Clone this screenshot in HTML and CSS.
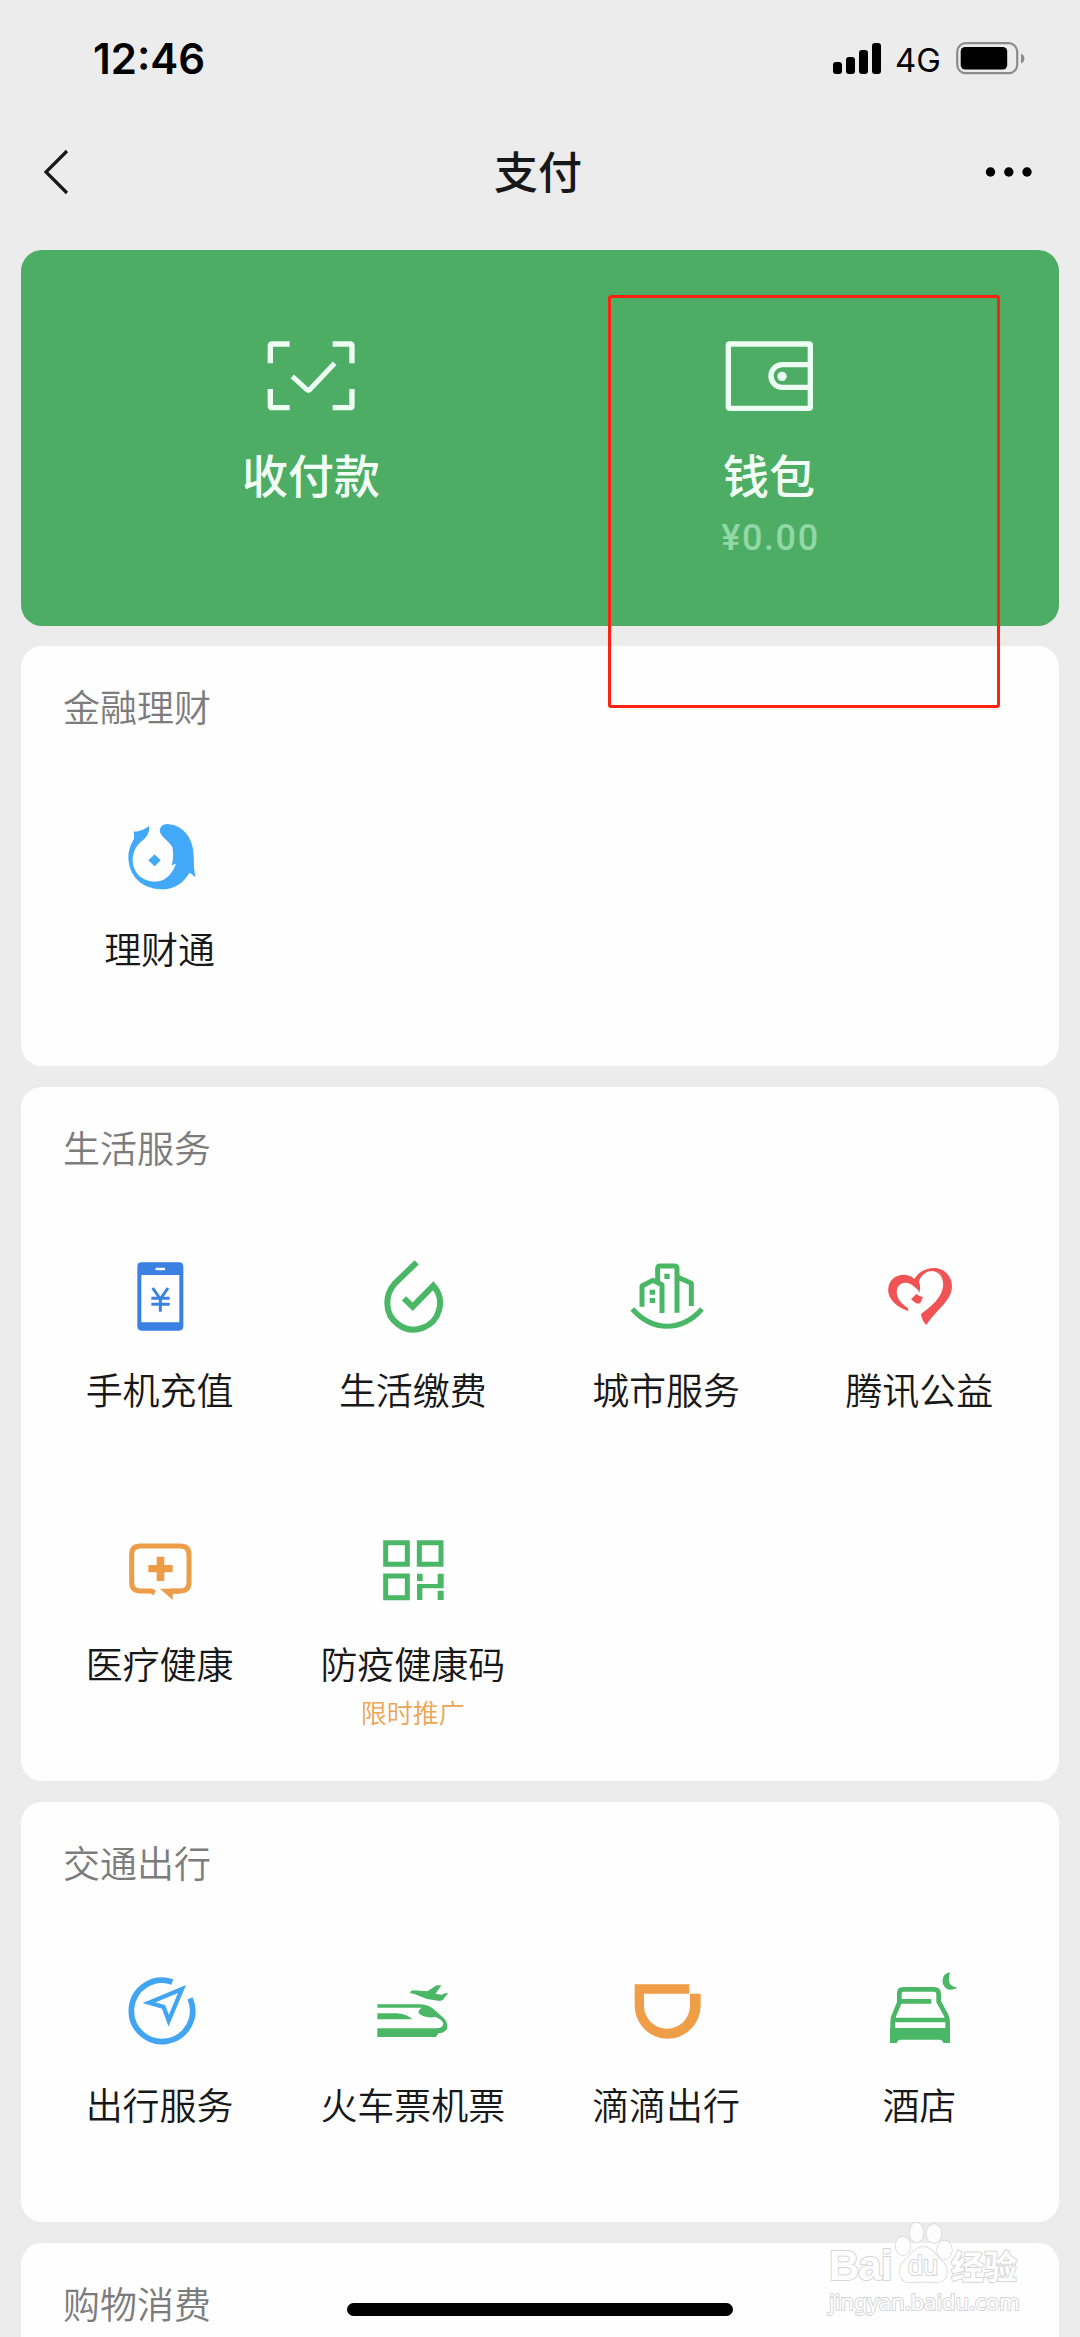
FILE: index.html
```html
<!DOCTYPE html>
<html lang="zh-CN">
<head>
<meta charset="utf-8">
<title>支付</title>
<link rel="stylesheet" href="styles.css">
</head>
<body>
<div class="screen">
  <div class="status">
    <span class="time">12:46</span>
    <div class="status-right">
      <svg class="signal" viewBox="0 0 48 32" width="48" height="32"><rect x="0" y="19" width="9" height="12" rx="3"/><rect x="13" y="14" width="9" height="17" rx="3"/><rect x="26" y="7" width="9" height="24" rx="3"/><rect x="39" y="0" width="9" height="31" rx="3"/></svg>
      <span class="network">4G</span>
      <svg class="battery" viewBox="0 0 69 33" width="69" height="33"><rect x="1.2" y="1.2" width="60" height="30" rx="8.5" fill="none" stroke="#8c8c8c" stroke-width="2.2"/><rect x="4.700" y="5" width="46.500" height="22.500" rx="4.500"/><path d="M65 11.500q3.400 1.500 3.400 5t-3.400 5z" fill="#8c8c8c"/></svg>
    </div>
  </div>

  <div class="navbar">
    <svg class="back" viewBox="0 0 26 46" width="26" height="46"><path d="M24 2 3 23l21 21" fill="none" stroke="#181818" stroke-width="3.200"/></svg>
    <h1 class="title">支付</h1>
    <svg class="more" viewBox="0 0 48 12" width="48" height="12"><circle cx="5.500" cy="6" r="4.700"/><circle cx="23.800" cy="6" r="4.700"/><circle cx="42" cy="6" r="4.700"/></svg>
  </div>

  <main class="cards">
    <section class="pay">
      <div class="pay-item">
        <svg class="pay-icon" viewBox="0 0 264 210"><g fill="none" stroke="#ecfff2" stroke-width="16"><path d="M10 67V15q0-6 6-6h52M197 9h52q6 0 6 6v52M255 144v50q0 6-6 6h-52M68 200H16q-6 0-6-6v-50"/><path d="M76 106l45 41q3 2 6 0l76-80" stroke-width="15"/></g></svg>
        <span class="pay-label">收付款</span>
      </div>
      <div class="pay-item">
        <svg class="pay-icon" viewBox="0 0 264 210"><g fill="none" stroke="#ecfff2" stroke-width="16"><rect x="10" y="9" width="246" height="193" rx="4"/><path d="M250 71h-78a34 34 0 0 0 0 68h78"/></g><circle cx="171" cy="106" r="14" fill="#ecfff2"/></svg>
        <span class="pay-label">钱包</span>
        <span class="balance">¥0.00</span>
      </div>
    </section>

    <section class="card">
      <h2 class="heading">金融理财</h2>
      <div class="grid">
        <div class="item">
          <svg class="icon" viewBox="359 591 240 240" fill="#42a8f8"><path d="M400 638Q428 636 447 620Q448 645 432 660C410 676 397 695 397 724C398 764 428 788 464 788Q508 786 527 734L514 739Q522 712 516 684C505 665 479 653 478 633Q482 614 502 615C552 619 580 661 580 713Q579 742 585 775Q576 764 567 761C549 794 520 812 481 811C423 809 385 770 384 715Q384 687 401 660Q402 649 400 638Z"/><path d="M463 707l17 17-17 17-18-17z" stroke="#42a8f8" stroke-width="2" stroke-linejoin="round"/></svg>
          <span class="label">理财通</span>
        </div>
      </div>
    </section>

    <section class="card">
      <h2 class="heading">生活服务</h2>
      <div class="grid">
        <div class="item">
          <svg class="icon" viewBox="179 441 240 240"><path fill="#3b81e2" fill-rule="evenodd" d="M244 457h112q13 0 13 13v179q0 13-13 13H244q-13 0-13-13V470q0-13 13-13zM243 495v142h114V495zM289 473q-4 0-4 4t4 4h22q4 0 4-4t-4-4z"/><path d="M277 534l23 33 23-33M273 565h55M273 583h55M300 567v38" fill="none" stroke="#3b81e2" stroke-width="9"/></svg>
          <span class="label">手机充值</span>
        </div>
        <div class="item">
          <svg class="icon" viewBox="938 441 240 240"><path d="M1069 457L1003 521Q981 547 981 577A79 79 0 1 0 1119 527L1057 590L1031 565" fill="none" stroke="#49b766" stroke-width="18"/></svg>
          <span class="label">生活缴费</span>
        </div>
        <div class="item">
          <svg class="icon" viewBox="198 111 240 240"><g fill="none" stroke="#49b766" stroke-width="15"><path d="M246 260V198L278 181 306 194V279M293 188V146q0-8 8-8h42q8 0 8 8V278M354 172L394 190V258" stroke-linejoin="round"/><path d="M217 267Q262 318 321 319Q381 318 426 267"/></g><path fill="#49b766" d="M313 161h16v16h-16zM269 209h16v15h-16zM269 234h16v15h-16z"/></svg>
          <span class="label">城市服务</span>
        </div>
        <div class="item">
          <svg class="icon" viewBox="957 111 240 240" fill="#f05353"><path d="M1046 274C1007 261 980 233 985 203C989 178 1008 163 1034 164Q1051 165 1063 177Q1084 143 1127 144C1163 149 1180 180 1175 209C1168 247 1127 271 1099 315Q1085 301 1083 282C1115 258 1144 234 1149 201C1152 172 1134 153 1116 153C1096 153 1078 171 1077 187Q1083 199 1078 219Q1074 207 1063 200C1045 183 1021 185 1012 204C1005 229 1020 248 1043 264Z"/><path d="M1069 222q9 8 20 9l-8 18q-8 4-15-1l-13-10z"/><path d="M1131 153q20 14 17 47" fill="none" stroke="#fff" stroke-width="2" opacity=".5"/></svg>
          <span class="label">腾讯公益</span>
        </div>
        <div class="item">
          <svg class="icon" viewBox="179 93 240 240"><path d="M283 279L273 273H240q-26 0-26-26V164q0-26 26-26H360q26 0 26 26V247q0 26-26 26H330" fill="none" stroke="#ed9d48" stroke-width="15"/><path d="M299 266h60v15H337V300zM289 170h23v25h25v22h-25v26h-23v-26h-25v-22h25z" fill="#ed9d48"/></svg>
          <span class="label">医疗健康</span>
        </div>
        <div class="item">
          <svg class="icon" viewBox="938 93 240 240"><path d="M976 128h65v65h-65zM1077 128h65v65h-65zM976 228h65v65h-65z" fill="none" stroke="#49b766" stroke-width="15"/><path fill="#49b766" d="M1070 221h17v22h-17zM1132 221h18v44h-64v35h-16v-48h62zM1132 272h18v28h-18z"/></svg>
          <span class="label">防疫健康码</span>
          <span class="note">限时推广</span>
        </div>
      </div>
    </section>

    <section class="card">
      <h2 class="heading">交通出行</h2>
      <div class="grid">
        <div class="item">
          <svg class="icon" viewBox="179 456 240 240"><g fill="none" stroke="#42a5f1" stroke-width="17"><path d="M336 486A92 92 0 1 0 389 535"/><path d="M266 548L365 507 325 602 310 561Z" stroke-width="13" stroke-miterlimit="8"/></g></svg>
          <span class="label">出行服务</span>
        </div>
        <div class="item">
          <svg class="icon" viewBox="938 456 240 240" fill="#49b766"><path d="M951 553H1078Q1108 553 1127 574L1150 594Q1164 609 1160 626Q1154 638 1134 640L1127 651H951V625H1125Q1149 626 1149 610Q1143 597 1126 591Q1092 596 1075 580Q1073 569 1084 563H951Z"/><path d="M951 580H1010Q1042 583 1056 598H951ZM1049 519Q1051 511 1060 511L1101 514 1129 496H1143L1125 522 1145 524 1153 520H1163L1148 539 1139 543 1100 537 1062 522Z"/></svg>
          <span class="label">火车票机票</span>
        </div>
        <div class="item">
          <svg class="icon" viewBox="198 96 240 240"><path d="M224 133H388V161H252V197A69 69 0 0 0 390 197V161H422V197A99 99 0 0 1 224 197Z" fill="#ef9d46"/></svg>
          <span class="label">滴滴出行</span>
        </div>
        <div class="item">
          <svg class="icon" viewBox="957 96 240 240"><path d="M1018 190V160q0-12 12-12H1122q14 0 14 14V185L1158 225Q1163 234 1163 247V275M1018 184H1114M1018 188L1002 226Q998 234 998 247V275M1001 240H1160" fill="none" stroke="#49b766" stroke-width="14"/><path d="M990 264H1170V309H1150Q1148 299 1138 299H1023Q1013 299 1010 309H990ZM1170 97Q1142 103 1149 132Q1161 160 1193 143Q1157 140 1170 97Z" fill="#49b766"/></svg>
          <span class="label">酒店</span>
        </div>
      </div>
    </section>

    <section class="card card-cut">
      <h2 class="heading">购物消费</h2>
    </section>
  </main>

  <div class="highlight"></div>
  <div class="home-bar"></div>
  <div class="watermark">
    <div class="wm-row">
      <span class="wm-bai">Bai</span>
      <span class="wm-paw">
        <svg viewBox="0 0 60 64" width="60" height="64" fill="#fefefe" fill-opacity=".92" stroke="#d4d4d4" stroke-width="1.300"><ellipse cx="9" cy="25" rx="7.500" ry="9.500"/><ellipse cx="22.500" cy="11.500" rx="7" ry="10"/><ellipse cx="40" cy="12.500" rx="7.500" ry="9.500"/><ellipse cx="50.500" cy="29" rx="7.500" ry="9.500"/><path d="M29.500 26c8 0 11 7 17 12.500 11 9 7 24-5 23-8-1-16-1-24 0-12 1-16-13-7-22C18 33 21 26 29.500 26z"/></svg>
        <span class="wm-du">du</span>
      </span>
      <span class="wm-cn">经验</span>
    </div>
    <div class="wm-url">jingyan.baidu.com</div>
  </div>
</div>
</body>
</html>
```
FILE: styles.css
```css
* { box-sizing: border-box; }

body {
  margin: 0;
  background: #ececec;
  font-family: "Noto Sans CJK SC", "Noto Sans", sans-serif;
  color: #181818;
}

h1, h2 { margin: 0; font-weight: 400; }
svg { display: block; flex: none; }

.screen {
  position: relative;
  width: 1080px;
  height: 2337px;
  overflow: hidden;
  display: flex;
  flex-direction: column;
}

/* Status bar */
.status {
  height: 117px;
  flex: none;
  padding: 0 55px 0 93px;
  display: flex;
  justify-content: space-between;
  align-items: center;
  font-family: Inter, "Liberation Sans", sans-serif;
  color: #000;
}
.time { font-size: 42px; font-weight: 600; line-height: 50px; }
.status-right { display: flex; align-items: center; }
.network { width: 46px; margin: 2px 15px 0 14px; font-size: 33px; line-height: 40px; white-space: nowrap; }

/* Navigation bar */
.navbar {
  height: 133px;
  flex: none;
  padding: 0 47px 23px 43px;
  display: grid;
  grid-template-columns: 1fr auto 1fr;
  align-items: center;
}
.title { font-size: 44px; font-weight: 500; line-height: 64px; margin-top: -4px; }
.more { justify-self: end; }

/* Cards */
.cards {
  flex: 1;
  padding: 0 21px;
  display: flex;
  flex-direction: column;
  gap: 20.8px;
}
.pay {
  height: 375.6px;
  flex: none;
  border-radius: 21px;
  background: #4dad65;
  padding: 91px 61px 0;
  display: grid;
  grid-template-columns: 1fr 1fr;
}
.pay-item { display: flex; flex-direction: column; align-items: center; }
.pay-icon { width: 88px; height: 70px; }
.pay-label { margin-top: 28px; font-size: 46px; font-weight: 500; line-height: 68px; color: #f1fff4; }
.balance {
  margin-top: 9px;
  margin-left: 3px;
  font-family: Roboto, sans-serif;
  font-size: 36px;
  font-weight: 500;
  line-height: 44px;
  letter-spacing: 1.6px;
  color: #90d8a4;
}

.card {
  flex: none;
  border-radius: 21px;
  background: #fefefe;
  padding: 33px 13px 0 12px;
}
.card-cut { height: 120px; }
.heading {
  padding-left: 30px;
  height: 54px;
  font-size: 37px;
  font-weight: 350;
  line-height: 54px;
  color: #7c7c7c;
}
.grid {
  margin-top: 83px;
  display: grid;
  grid-template-columns: repeat(4, 1fr);
  grid-auto-rows: 250px;
  row-gap: 24px;
}
.item { display: flex; flex-direction: column; align-items: center; }
.icon { width: 80px; height: 80px; }
.label { margin-top: 25px; font-size: 37px; font-weight: 350; line-height: 54px; white-space: nowrap; }
.note { margin-top: 2px; font-size: 26px; line-height: 40px; font-weight: 350; color: #eba554; }

/* Overlays */
.highlight {
  position: absolute;
  left: 608px;
  top: 295px;
  width: 392px;
  height: 413px;
  border: 3px solid #ff2212;
  border-radius: 3px;
}
.home-bar {
  position: absolute;
  left: 347px;
  top: 2303px;
  width: 386px;
  height: 13px;
  border-radius: 7px;
  background: #000;
}
.watermark {
  position: absolute;
  left: 829px;
  top: 2221px;
  color: #fefefe;
  -webkit-text-stroke: 2px #d6d6d6;
  paint-order: stroke fill;
}
.wm-row { display: flex; align-items: flex-end; height: 64px; }
.wm-bai { width: 65px; font: 700 42px/38px "Liberation Sans", sans-serif; letter-spacing: -1px; }
.wm-paw { position: relative; width: 57px; }
.wm-du {
  position: absolute;
  left: 14px;
  top: 32px;
  font: 400 27px/27px "Liberation Sans", sans-serif;
}
.wm-cn { font-size: 33px; font-weight: 700; line-height: 40px; }
.wm-url { font: 400 22px/26px "Noto Sans", sans-serif; margin-top: 3px; white-space: nowrap; }
```
